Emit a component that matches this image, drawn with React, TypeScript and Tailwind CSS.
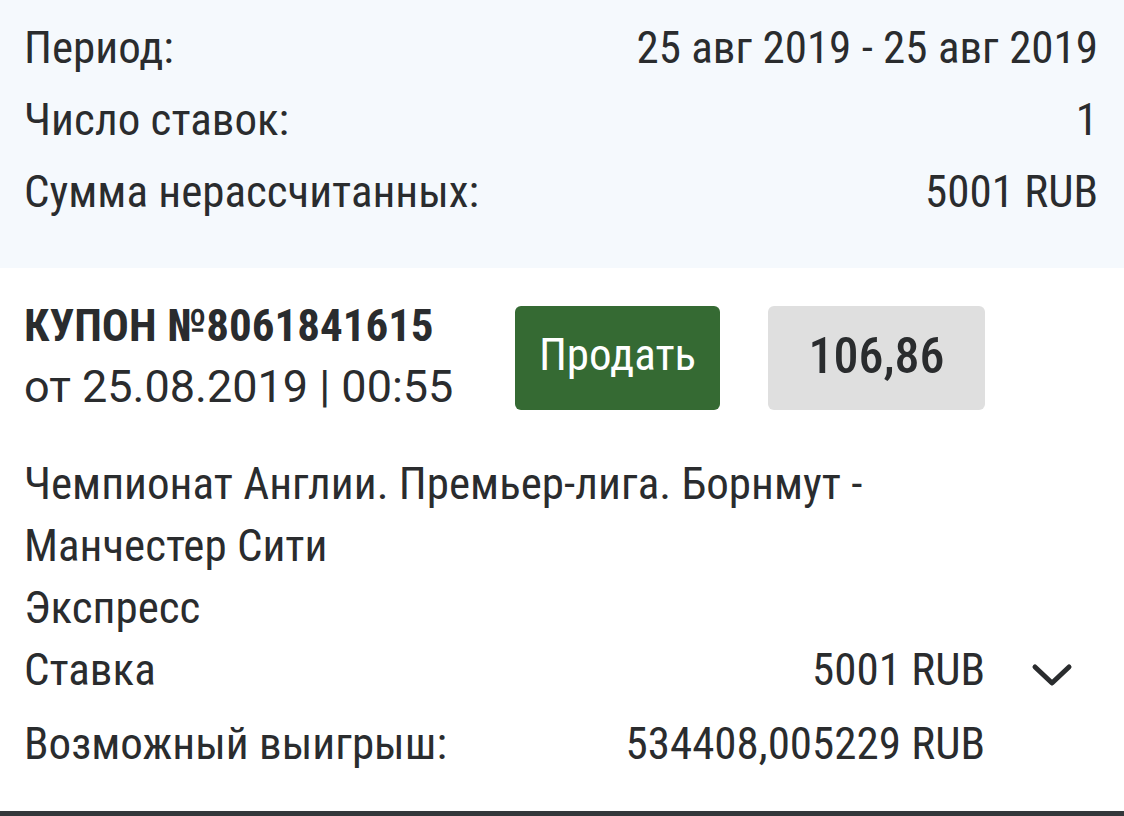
import React from 'react';

const summary = [
  { label: 'Период:', value: '25 авг 2019 - 25 авг 2019' },
  { label: 'Число ставок:', value: '1' },
  { label: 'Сумма нерассчитанных:', value: '5001 RUB' },
];

const Chevron = () => (
  <svg width="42" height="26" viewBox="0 0 42 26" fill="none">
    <path d="M4 4 L21 20 L38 4" stroke="#2a2c2e" strokeWidth="5" strokeLinecap="round" strokeLinejoin="round" />
  </svg>
);

const App: React.FC = () => {
  return (
    <div className="w-[1124px] h-[816px] bg-white flex flex-col text-[#2a2c2e] font-['Roboto_Condensed','Roboto',sans-serif] font-stretch-condensed overflow-hidden">
      {/* Сводка */}
      <div className="h-[268px] bg-[#f5f9fd] pl-6 pr-[26px] pt-[11px] flex flex-col">
        {summary.map((row) => (
          <div key={row.label} className="h-[72px] flex items-center justify-between text-[45px] leading-none">
            <span>{row.label}</span>
            <span>{row.value}</span>
          </div>
        ))}
      </div>

      {/* Купон */}
      <div className="flex-1 flex flex-col pl-6 pr-[139px] pt-[38px]">
        <div className="flex items-start">
          <div className="w-[491px] flex flex-col">
            <div className="text-[45px] font-bold leading-[40px] h-[42px]">КУПОН №8061841615</div>
            <div className="mt-[16px] text-[45px] leading-[46px] font-['Roboto',sans-serif] font-stretch-normal">от 25.08.2019 | 00:55</div>
          </div>
          <button className="w-[205px] h-[104px] rounded-md bg-[#356a33] text-white text-[45px] leading-none pb-2">Продать</button>
          <div className="ml-12 w-[217px] h-[104px] rounded-md bg-[#dfdfdf] flex items-center justify-center text-[50px] font-medium pb-1">106,86</div>
        </div>

        <div className="mt-[43px] text-[45px] leading-[62px] w-[880px]">Чемпионат Англии. Премьер-лига. Борнмут - Манчестер Сити</div>
        <div className="text-[45px] leading-[62px]">Экспресс</div>
        <div className="relative flex items-center justify-between text-[45px] leading-[62px]">
          <span>Ставка</span>
          <span>5001 RUB</span>
          <div className="absolute left-[1007px] top-[24px]"><Chevron /></div>
        </div>
        <div className="mt-[12px] flex items-center justify-between text-[45px] leading-[62px]">
          <span>Возможный выигрыш:</span>
          <span>534408,005229 RUB</span>
        </div>
      </div>

      <div className="h-[5px] bg-[#34383b]" />
    </div>
  );
};

export default App;
